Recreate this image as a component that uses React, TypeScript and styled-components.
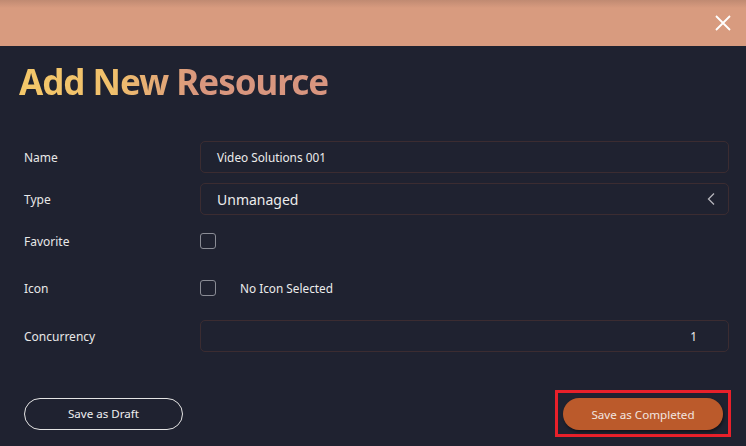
import React from 'react'
import styled, { createGlobalStyle } from 'styled-components'

const GlobalStyle = createGlobalStyle`
  html, body {
    margin: 0;
    padding: 0;
    background: #1f2230;
    font-family: 'Noto Sans', 'Open Sans', sans-serif;
  }
`

const Modal = styled.div`
  width: 746px;
  height: 446px;
  background: #1f2230;
  color: #e6e6e6;
  display: flex;
  flex-direction: column;
  overflow: hidden;
`

const TopBar = styled.div`
  height: 46px;
  flex-shrink: 0;
  background: linear-gradient(180deg, #c08a72 0px, #d89b7f 8px, #d89b7f 100%);
  display: flex;
  justify-content: flex-end;
  align-items: center;
  padding-right: 14px;
`

const CloseButton = styled.button`
  background: none;
  border: none;
  padding: 0;
  width: 18px;
  height: 18px;
  display: flex;
  align-items: center;
  justify-content: center;
  cursor: pointer;
`

const Title = styled.h1`
  margin: 17px 0 0 19px;
  font-size: 35px;
  font-weight: 700;
  line-height: 38px;
  letter-spacing: -1px;
  align-self: flex-start;
  background: linear-gradient(90deg, #f4c86a 0%, #f0c06c 30%, #d9977e 58%, #d8957f 100%);
  -webkit-background-clip: text;
  background-clip: text;
  color: transparent;
`

const Form = styled.div`
  display: flex;
  flex-direction: column;
  padding: 0 17px 0 24px;
  margin-top: 40px;
`

const Row = styled.div<{ $gap: number }>`
  display: grid;
  grid-template-columns: 176px 1fr;
  align-items: center;
  height: 32px;
  margin-top: ${p => p.$gap}px;
`

const Label = styled.div`
  font-size: 12px;
  color: #e8e8e8;
`

const Field = styled.div<{ $right?: boolean; $large?: boolean }>`
  height: 32px;
  box-sizing: border-box;
  border: 1px solid #3b2c31;
  border-radius: 5px;
  display: flex;
  align-items: center;
  justify-content: ${p => (p.$right ? 'flex-end' : 'space-between')};
  padding: ${p => (p.$right ? '0 31px 0 16px' : '0 12px 0 16px')};
  font-size: ${p => (p.$large ? '14px' : '11.8px')};
  color: #ececec;
`

const Check = styled.span`
  width: 16px;
  height: 16px;
  box-sizing: border-box;
  border: 1.5px solid #8a8c95;
  border-radius: 3px;
  flex-shrink: 0;
`

const CheckLine = styled.div`
  display: flex;
  align-items: center;
  gap: 24px;
  font-size: 11.8px;
  color: #ececec;
`

const Footer = styled.div`
  display: flex;
  justify-content: space-between;
  align-items: center;
  padding: 0 15px 0 24px;
  margin-top: 38px;
`

const DraftButton = styled.button`
  width: 159px;
  height: 32px;
  border-radius: 16px;
  border: 1.5px solid #e4e4e4;
  background: transparent;
  color: #f0f0f0;
  font-family: inherit;
  font-size: 11.6px;
`

const Highlight = styled.span`
  display: inline-flex;
  border: 3px solid #e8202a;
  padding: 5px 5px 4px 5px;
`

const CompleteButton = styled.button`
  width: 160px;
  height: 32px;
  border-radius: 16px;
  border: none;
  background: #bb5a2b;
  color: #f2e6e0;
  font-family: inherit;
  font-size: 11.6px;
  box-shadow: 1px 2px 3px rgba(0, 0, 0, 0.45);
`

export default function App() {
  return (
    <>
      <GlobalStyle />
      <Modal>
        <TopBar>
          <CloseButton aria-label="Close">
            <svg width="16" height="16" viewBox="0 0 16 16">
              <path d="M1 1 L15 15 M15 1 L1 15" stroke="#ffffff" strokeWidth="1.8" />
            </svg>
          </CloseButton>
        </TopBar>
        <Title>Add New Resource</Title>
        <Form>
          <Row $gap={0}>
            <Label>Name</Label>
            <Field>Video Solutions 001</Field>
          </Row>
          <Row $gap={10}>
            <Label>Type</Label>
            <Field $large>
              Unmanaged
              <svg width="10" height="14" viewBox="0 0 10 14">
                <path d="M8 1.5 L2.5 7 L8 12.5" stroke="#b5b5bb" strokeWidth="1.3" fill="none" />
              </svg>
            </Field>
          </Row>
          <Row $gap={10}>
            <Label>Favorite</Label>
            <CheckLine>
              <Check />
            </CheckLine>
          </Row>
          <Row $gap={15}>
            <Label>Icon</Label>
            <CheckLine>
              <Check />
              No Icon Selected
            </CheckLine>
          </Row>
          <Row $gap={16}>
            <Label>Concurrency</Label>
            <Field $right>1</Field>
          </Row>
        </Form>
        <Footer>
          <DraftButton>Save as Draft</DraftButton>
          <Highlight>
            <CompleteButton>Save as Completed</CompleteButton>
          </Highlight>
        </Footer>
      </Modal>
    </>
  )
}
